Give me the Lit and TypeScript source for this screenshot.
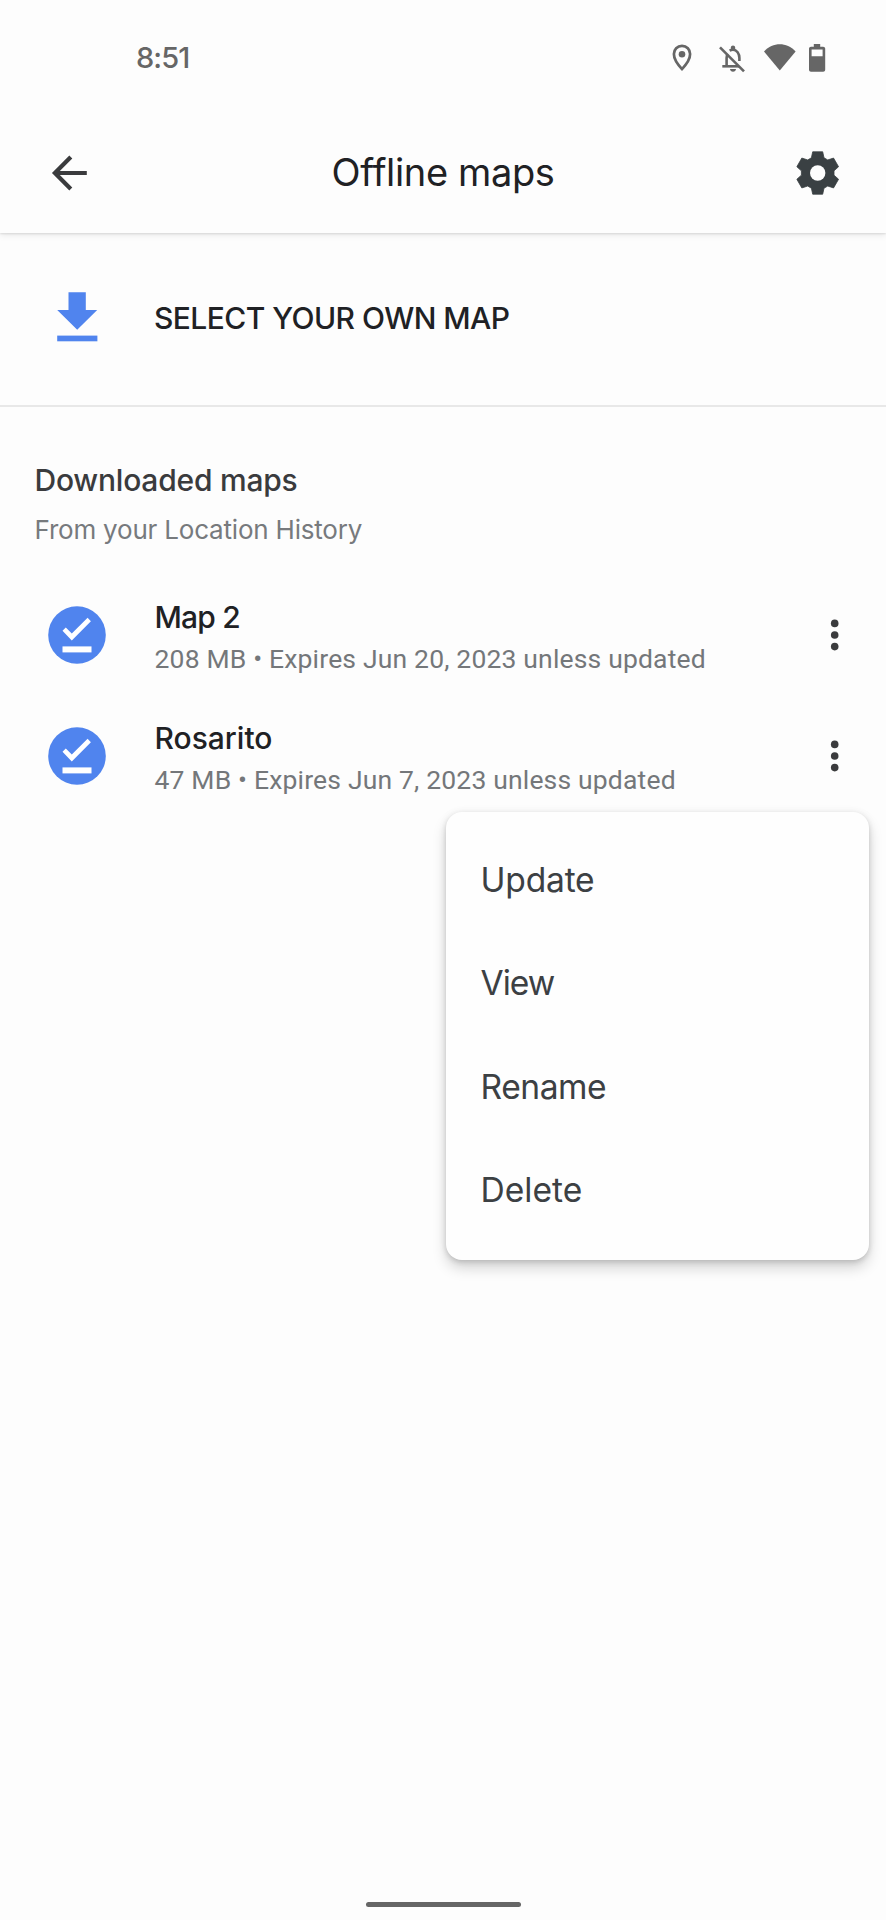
import { LitElement, html, css, svg } from 'lit';

const gearPoints = Array.from({ length: 6 }, (_, i) => {
  const a = (i * Math.PI) / 3;
  return [[-6.3, -15.2], [-5, -21.2], [5, -21.2], [6.3, -15.2]]
    .map(([x, y]) => `${(x * Math.cos(a) - y * Math.sin(a)).toFixed(2)},${(x * Math.sin(a) + y * Math.cos(a)).toFixed(2)}`)
    .join(' ');
}).join(' ');

const maps = [
  { name: 'Map 2', cls: 'name tight', info: '208 MB • Expires Jun 20, 2023 unless updated' },
  { name: 'Rosarito', cls: 'name', info: '47 MB • Expires Jun 7, 2023 unless updated' },
];

const actions = [
  { label: 'Update', cls: 'item' },
  { label: 'View', cls: 'item narrow' },
  { label: 'Rename', cls: 'item snug' },
  { label: 'Delete', cls: 'item wide' },
];

class AppRoot extends LitElement {
  static styles = css`
    :host {
      display: block;
      position: relative;
      height: 1920px;
      background: #fdfdfd;
      font-family: Inter, Roboto, sans-serif;
      color: #202124;
      overflow: hidden;
    }
    .screen { display: flex; flex-direction: column; height: 100%; white-space: nowrap; }
    svg { display: block; flex: none; }
    .status {
      display: flex; align-items: center; justify-content: space-between;
      height: 116px; box-sizing: border-box; padding: 0 60px 0 136px; flex: none;
      color: #666;
    }
    .time { font-size: 29px; font-weight: 450; letter-spacing: -0.9px; line-height: 36px; }
    .header {
      display: grid; grid-template-columns: 100px 1fr 100px; align-items: center;
      height: 117px; box-sizing: border-box; padding-bottom: 4px; flex: none;
      box-shadow: 0 1px 2px rgba(0,0,0,.1), 0 2px 7px rgba(0,0,0,.09);
      clip-path: inset(0 0 -14px 0);
    }
    .title {
      margin: 0; text-align: center; font-size: 38px; font-weight: 380;
      letter-spacing: -0.36px; line-height: 44px; padding-bottom: 2px;
    }
    .select {
      display: flex; align-items: center; height: 174px; box-sizing: border-box;
      padding: 0 0 2px 42px; border-bottom: 2px solid #e8e8e8; flex: none; gap: 42px;
    }
    .select-label { font-size: 30px; font-weight: 500; letter-spacing: -0.55px; line-height: 36px; }
    .section { padding: 53px 0 29px 34.5px; flex: none; }
    .heading { margin: 0; font-size: 30px; font-weight: 500; letter-spacing: -0.22px; line-height: 40px; color: #3a3b3d; }
    .sub { margin-top: 13px; font-size: 26px; letter-spacing: -0.2px; line-height: 33px; color: #777a7d; }
    .row {
      display: grid; grid-template-columns: 154.5px 1fr 102px; align-items: center;
      height: 120.7px; flex: none;
    }
    .badge { margin-left: 48px; }
    .text { padding-top: 6px; }
    .name { font-size: 30px; font-weight: 500; line-height: 42px; }
    .tight { letter-spacing: -0.8px; }
    .info { font-family: Roboto, sans-serif; font-size: 26.5px; letter-spacing: 0.17px; line-height: 42px; color: #74777a; }
    .more { margin-left: 41px; }
    .spacer { flex: 1; }
    .nav { align-self: center; width: 155px; height: 5px; border-radius: 3px; background: #666; margin-bottom: 13px; flex: none; }
    .menu {
      position: absolute; left: 446px; top: 811.5px; width: 423px; height: 448px;
      box-sizing: border-box; padding: 16px 36px 16px 34.5px; border-radius: 16px; background: #fefefe;
      box-shadow: 0 8px 14px rgba(0,0,0,.17), 0 2px 5px rgba(0,0,0,.12), 0 0 10px rgba(0,0,0,.05);
      white-space: nowrap;
    }
    .item { height: 103.5px; display: flex; align-items: center; font-size: 33.6px; letter-spacing: -0.2px; color: #3c4043; }
    .narrow { letter-spacing: -1px; }
    .snug { letter-spacing: -0.45px; }
    .wide { letter-spacing: 0; }
  `;

  renderBadge() {
    return html`<svg class="badge" width="58" height="58" viewBox="-29 -29 58 58">
      <circle r="28.8" fill="#5084ee"></circle>
      <path d="M-14.5 -4.2L-11.2 -7.5L-5.2 -1.6L10.6 -17.3L13.9 -13.8L-5.2 5.4Z" fill="#fff"></path>
      <rect x="-14.5" y="11.4" width="29" height="6" fill="#fff"></rect>
    </svg>`;
  }

  render() {
    return html`
      <div class="screen">
        <div class="status">
          <span class="time">8:51</span>
          <svg width="156" height="32" viewBox="670 41.5 156 32" fill="#666">
            <path d="M682 45.4C677.3 45.4 673.9 49 673.9 53.6C673.9 58.8 677.8 64.2 682 68.6C686.2 64.2 690.1 58.8 690.1 53.6C690.1 49 686.7 45.4 682 45.4Z" fill="none" stroke="#666" stroke-width="2.7"></path>
            <circle cx="682" cy="53.7" r="3.3"></circle>
            <g fill="none" stroke="#666" stroke-width="2.6">
              <path d="M720 46.8L744 70.8"></path>
              <path d="M722.3 65.8H739"></path>
              <path d="M726.6 65.5V57.5C726.6 56 726.9 54.6 727.5 53.4"></path>
              <path d="M729.6 50.2C731 49.4 732 49.2 733 49.2C736.8 49.2 739.4 53 739.4 57.5V60.5"></path>
            </g>
            <path d="M730.8 50V47.2C730.8 44.3 735.2 44.3 735.2 47.2V50Z"></path>
            <path d="M730 68.6H736C736 72 730 72 730 68.6Z"></path>
            <path d="M779.8 70L764 50.9C773 41.4 786.6 41.4 795.6 50.9Z"></path>
            <path fill-rule="evenodd" d="M813.8 43.5H820.2V46.2H823.2C824.3 46.2 825.2 47 825.2 48.1V69.2C825.2 70.3 824.3 71.2 823.2 71.2H811C809.9 71.2 809 70.3 809 69.2V48.1C809 47 809.9 46.2 811 46.2H813.8ZM811.6 49V55.8H822.6V49Z"></path>
          </svg>
        </div>
        <header class="header">
          <svg width="100" height="60" viewBox="0 142.7 100 60">
            <path d="M86.8 172.7H55M70.8 156.8L54.9 172.7L70.8 188.6" fill="none" stroke="#3a3b3d" stroke-width="4.2"></path>
          </svg>
          <h1 class="title">Offline maps</h1>
          <svg width="100" height="60" viewBox="786 142.7 100 60">
            <g transform="translate(817.7 172.7)">
              <polygon points=${gearPoints} fill="#3a4043" stroke="#3a4043" stroke-width="0.8" stroke-linejoin="round"></polygon>
              <circle r="7.7" fill="#fdfdfd"></circle>
            </g>
          </svg>
        </header>
        <div class="select">
          <svg width="70" height="60" viewBox="42 288 70 60" fill="#5084ee">
            <path d="M68.5 292.3H85.8V310H97.2L77.2 329.7L57.2 310H68.5Z"></path>
            <rect x="57.2" y="335.6" width="40.2" height="5.7"></rect>
          </svg>
          <span class="select-label">SELECT YOUR OWN MAP</span>
        </div>
        <div class="section">
          <h2 class="heading">Downloaded maps</h2>
          <div class="sub">From your Location History</div>
        </div>
        ${maps.map((m) => html`
          <div class="row">
            ${this.renderBadge()}
            <div class="text">
              <div class=${m.cls}>${m.name}</div>
              <div class="info">${m.info}</div>
            </div>
            <svg class="more" width="20" height="40" viewBox="-10 -20 20 40" fill="#3a3b3d">
              ${[-11.6, 0, 11.6].map((y) => svg`<circle cx="-0.3" cy=${y} r="3.8"></circle>`)}
            </svg>
          </div>`)}
        <div class="spacer"></div>
        <div class="nav"></div>
      </div>
      <div class="menu">
        ${actions.map((a) => html`<div class=${a.cls}>${a.label}</div>`)}
      </div>
    `;
  }
}
customElements.define('app-root', AppRoot);
